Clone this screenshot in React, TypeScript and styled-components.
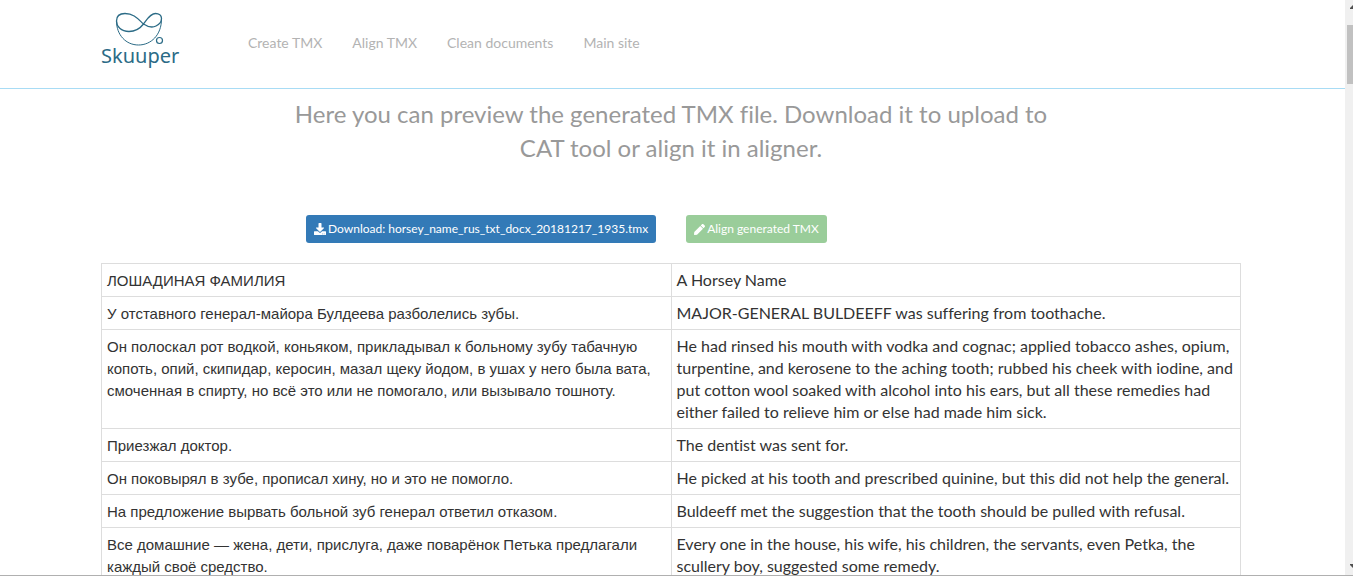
import React from "react";
import styled, { createGlobalStyle } from "styled-components";
import { FaDownload, FaPen } from "react-icons/fa";

const GlobalStyle = createGlobalStyle`
  *, *::before, *::after { box-sizing: border-box; }
  body {
    margin: 0;
    background: #fff;
    color: #333;
    font: 16px/22px Lato, "Liberation Sans", sans-serif;
    font-variant-ligatures: none;
  }
`;

const Frame = styled.div`
  height: 100vh;
  overflow: hidden;
`;

const Pane = styled.div`
  display: flex;
  height: calc(100vh - 1px);
  border-bottom: 1px solid #b0b0b0;
`;

const Viewport = styled.div`
  flex: 1;
  min-width: 0;
  overflow: hidden;
`;

const Header = styled.header`
  border-bottom: 1px solid #a8dcf5;
  padding-right: 3px;
`;

const Container = styled.div`
  max-width: 1140px;
  margin: 0 auto;
`;

const Bar = styled(Container)`
  display: flex;
  align-items: flex-start;
  height: 88px;
`;

const Brand = styled.a`
  display: block;
  width: 80px;
  padding-top: 8px;
  margin-right: 52px;
`;

const LogoSvg = styled.svg`
  display: block;
`;

const Nav = styled.nav`
  display: flex;
  padding-top: 33px;
`;

const NavLink = styled.a`
  padding: 0 15px;
  font-size: 14px;
  line-height: 20px;
  color: #b3b3b3;
  text-decoration: none;
`;

const Main = styled.main`
  padding-right: 3px;
`;

const Title = styled.h1`
  max-width: 760px;
  margin: 0 auto;
  padding-top: 8px;
  font-size: 24px;
  line-height: 34px;
  font-weight: 400;
  text-align: center;
  color: #999;
`;

const Actions = styled.div`
  display: flex;
  gap: 30px;
  max-width: 730px;
  margin: 50px auto 20px;
`;

const Button = styled.button<{ $tone: "primary" | "success" }>`
  display: flex;
  align-items: center;
  gap: 2px;
  height: 28px;
  padding: 0 8px;
  border: 0;
  border-radius: 3px;
  background: ${(p) => (p.$tone === "primary" ? "#337ab7" : "#9acd9a")};
  color: #fff;
  font: 12px/18px Lato, sans-serif;
  white-space: nowrap;
`;

const Table = styled.table`
  width: 100%;
  table-layout: fixed;
  border-collapse: collapse;
`;

const Cell = styled.td`
  padding: 5px;
  border: 1px solid #ddd;
  vertical-align: top;
`;

const SourceCell = styled(Cell)`
  padding: 6px 5px 4px;
  font-family: "Liberation Sans", Arial, sans-serif;
  font-size: 15px;
`;

const Scrollbar = styled.div`
  width: 8px;
  display: flex;
  flex-direction: column;
  justify-content: space-between;
  align-items: flex-end;
  padding: 5px 0 7px;
  background: #f0f0f0;
  overflow: hidden;
`;

const Thumb = styled.div`
  width: 6px;
  height: 59px;
  margin: 16px 0 auto;
  background: #c1c1c1;
`;

const rows: [string, string][] = [
  ["ЛОШАДИНАЯ ФАМИЛИЯ", "A Horsey Name"],
  [
    "У отставного генерал-майора Булдеева разболелись зубы.",
    "MAJOR-GENERAL BULDEEFF was suffering from toothache.",
  ],
  [
    "Он полоскал рот водкой, коньяком, прикладывал к больному зубу табачную копоть, опий, скипидар, керосин, мазал щеку йодом, в ушах у него была вата, смоченная в спирту, но всё это или не помогало, или вызывало тошноту.",
    "He had rinsed his mouth with vodka and cognac; applied tobacco ashes, opium, turpentine, and kerosene to the aching tooth; rubbed his cheek with iodine, and put cotton wool soaked with alcohol into his ears, but all these remedies had either failed to relieve him or else had made him sick.",
  ],
  ["Приезжал доктор.", "The dentist was sent for."],
  [
    "Он поковырял в зубе, прописал хину, но и это не помогло.",
    "He picked at his tooth and prescribed quinine, but this did not help the general.",
  ],
  [
    "На предложение вырвать больной зуб генерал ответил отказом.",
    "Buldeeff met the suggestion that the tooth should be pulled with refusal.",
  ],
  [
    "Все домашние — жена, дети, прислуга, даже поварёнок Петька предлагали каждый своё средство.",
    "Every one in the house, his wife, his children, the servants, even Petka, the scullery boy, suggested some remedy.",
  ],
];

const links = ["Create TMX", "Align TMX", "Clean documents", "Main site"];

function Logo() {
  return (
    <LogoSvg width="80" height="64" viewBox="0 8 80 64" role="img" aria-label="Skuuper">
      <g fill="none" stroke="#2b6b86">
        <path
          strokeWidth="1.3"
          d="M15.500 21C15.500 16 19 13.500 24 13.500C33 13.500 37 19 42.500 24C47 27 52 27.500 55 26C59 24 60.500 22 60.500 18.500C60.500 15.500 58 13.500 54.500 13.500C49 13.500 46 19.500 42.500 24C39 28.500 34 31.500 28 31.500C20 31.500 15.500 26.500 15.500 21Z"
        />
        <path strokeWidth="1" d="M15.500 21C15.500 35 25 45 37.500 45C50 45 60.500 35 60.500 19" />
        <circle cx="58.500" cy="40.500" r="3" strokeWidth="1.2" />
      </g>
      <text x="0" y="63" fontFamily="'Noto Sans', sans-serif" fontSize="20" fill="#2b6b86">
        Skuuper
      </text>
    </LogoSvg>
  );
}

export default function App() {
  return (
    <Frame>
      <GlobalStyle />
      <Pane>
        <Viewport>
          <Header>
            <Bar>
              <Brand href="#">
                <Logo />
              </Brand>
              <Nav>
                {links.map((label) => (
                  <NavLink key={label} href="#">
                    {label}
                  </NavLink>
                ))}
              </Nav>
            </Bar>
          </Header>
          <Main>
            <Container>
              <Title>
                Here you can preview the generated TMX file. Download it to upload to CAT tool or
                align it in aligner.
              </Title>
              <Actions>
                <Button type="button" $tone="primary">
                  <FaDownload aria-hidden />
                  Download: horsey_name_rus_txt_docx_20181217_1935.tmx
                </Button>
                <Button type="button" $tone="success">
                  <FaPen size={11} aria-hidden />
                  Align generated TMX
                </Button>
              </Actions>
              <Table>
                <tbody>
                  {rows.map(([source, target]) => (
                    <tr key={source}>
                      <SourceCell lang="ru">{source}</SourceCell>
                      <Cell lang="en">{target}</Cell>
                    </tr>
                  ))}
                </tbody>
              </Table>
            </Container>
          </Main>
        </Viewport>
        <Scrollbar aria-hidden>
          <svg width="3" height="4" viewBox="0 0 3 4">
            <path d="M3 0V4H0V3Z" fill="#505050" />
          </svg>
          <Thumb />
          <svg width="3" height="4" viewBox="0 0 3 4">
            <path d="M3 4V0H0V1Z" fill="#505050" />
          </svg>
        </Scrollbar>
      </Pane>
    </Frame>
  );
}
